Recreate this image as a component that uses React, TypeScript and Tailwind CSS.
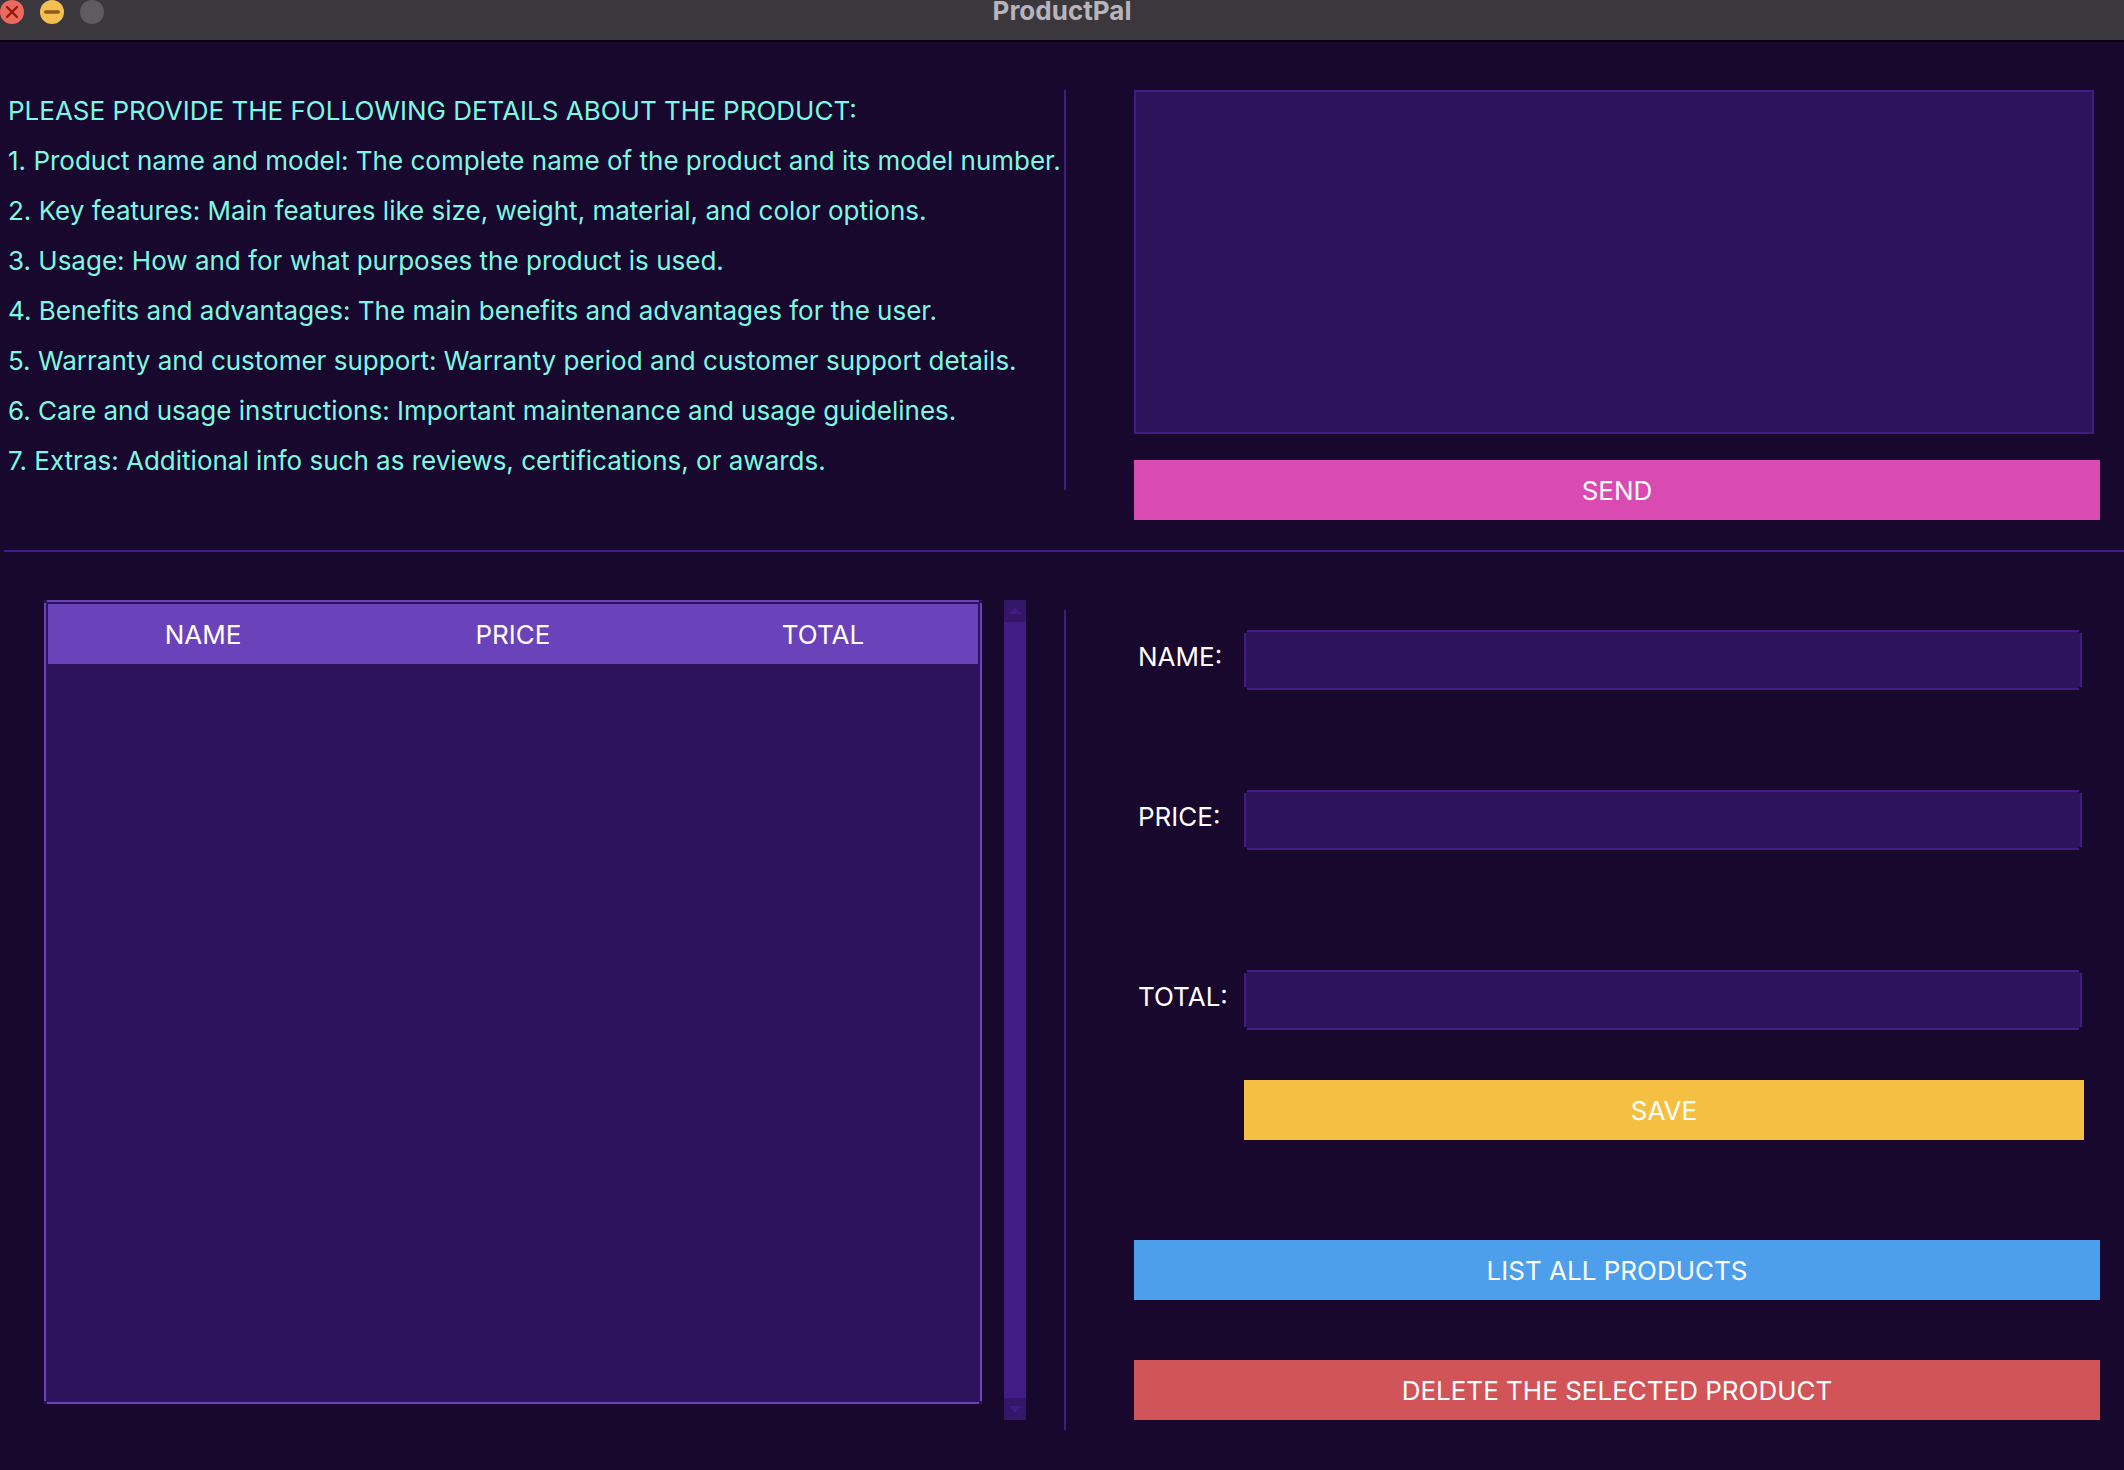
import type { ReactNode } from "react";

const instructions = [
  "PLEASE PROVIDE THE FOLLOWING DETAILS ABOUT THE PRODUCT:",
  "1. Product name and model: The complete name of the product and its model number.",
  "2. Key features: Main features like size, weight, material, and color options.",
  "3. Usage: How and for what purposes the product is used.",
  "4. Benefits and advantages: The main benefits and advantages for the user.",
  "5. Warranty and customer support: Warranty period and customer support details.",
  "6. Care and usage instructions: Important maintenance and usage guidelines.",
  "7. Extras: Additional info such as reviews, certifications, or awards.",
];

// Cuts a small square notch out of each corner of a framed box.
const notched =
  "[clip-path:polygon(3px_0,calc(100%_-_3px)_0,calc(100%_-_3px)_3px,100%_3px,100%_calc(100%_-_3px),calc(100%_-_3px)_calc(100%_-_3px),calc(100%_-_3px)_100%,3px_100%,3px_calc(100%_-_3px),0_calc(100%_-_3px),0_3px,3px_3px)]";

function TitleBar() {
  return (
    <header className="flex h-[42px] items-start border-b-2 border-[#08040d] bg-[#3a373d]">
      <div className="flex flex-1 gap-4">
        <button type="button" aria-label="Close" className="size-6">
          <svg viewBox="0 0 24 24" className="size-6">
            <circle cx="12" cy="12" r="12" fill="#ed6a5e" />
            <path d="M7 7l10 10M17 7L7 17" stroke="#8c1a10" strokeWidth="2.4" strokeLinecap="round" />
          </svg>
        </button>
        <button type="button" aria-label="Minimize" className="size-6">
          <svg viewBox="0 0 24 24" className="size-6">
            <circle cx="12" cy="12" r="12" fill="#f5bf4f" />
            <rect x="4" y="10.3" width="16" height="3.4" rx="1.7" fill="#8f591d" />
          </svg>
        </button>
        <button type="button" aria-label="Zoom" disabled className="size-6 rounded-full bg-[#5e5b61]" />
      </div>
      <h1 className="text-[26px] leading-[22px] font-bold text-[#b8b4bb]">ProductPal</h1>
      <div className="flex-1" />
    </header>
  );
}

function Bar({ color, children }: { color: string; children: ReactNode }) {
  return (
    <button type="button" className={`h-[60px] w-full text-center text-white ${color}`}>
      {children}
    </button>
  );
}

function Field({ id, label }: { id: string; label: string }) {
  return (
    <div className="flex">
      <label htmlFor={id} className="w-[110px] shrink-0 pl-1 leading-[54px] text-white">
        {label}
      </label>
      <input
        id={id}
        type="text"
        className={`mr-[2px] h-[60px] min-w-0 flex-1 border-2 border-[#421c85] bg-[#2d135b] px-3 text-white outline-none ${notched}`}
      />
    </div>
  );
}

function ScrollBar() {
  return (
    <div className="flex w-[22px] flex-col bg-[#421c85]">
      <button type="button" aria-label="Scroll up" className="size-[22px] bg-[#35176a]">
        <svg viewBox="0 0 22 22" className="size-[22px]">
          <path d="M4.5 14L11 7.5L17.5 14Z" fill="#421c85" />
        </svg>
      </button>
      <div className="flex-1" />
      <button type="button" aria-label="Scroll down" className="size-[22px] bg-[#35176a]">
        <svg viewBox="0 0 22 22" className="size-[22px]">
          <path d="M4.5 8L11 14.5L17.5 8Z" fill="#421c85" />
        </svg>
      </button>
    </div>
  );
}

export default function App() {
  return (
    <div className="flex min-h-screen flex-col bg-[#18082d] font-['Inter',sans-serif] text-[26px]">
      <TitleBar />

      <section className="grid grid-cols-[minmax(0,1066fr)_minmax(0,1058fr)] pt-12 pb-[30px]">
        <div className="h-[400px] border-r-2 border-[#421c85] pl-2 leading-[50px] whitespace-nowrap text-[#7df9e3]">
          <div className="-mt-1">
            {instructions.map((line) => (
              <p key={line}>{line}</p>
            ))}
          </div>
        </div>
        <div className="pr-6 pl-[68px]">
          <div className="flex pr-[6px] pb-[26px]">
            <textarea
              aria-label="Product details"
              className="h-[344px] w-full resize-none border-2 border-[#421c85] bg-[#2d135b] p-3 text-white outline-none"
            />
          </div>
          <Bar color="bg-[#d94ab3]">SEND</Bar>
        </div>
      </section>

      <hr className="ml-1 border-t-2 border-[#421c85]" />

      <section className="grid flex-1 grid-cols-[minmax(0,1066fr)_minmax(0,1058fr)]">
        <div className="mt-[58px] mb-10 flex border-r-2 border-[#421c85] pr-[38px] pl-11">
          <div className="-mt-[10px] mb-[10px] flex flex-1 gap-[22px]">
            <div className="mb-4 flex-1 bg-[#2d135b]">
              <div className={`h-full border-2 border-[#6a43ba] p-[2px] ${notched}`}>
                <table className="w-full table-fixed">
                  <thead>
                    <tr className="h-[60px] bg-[#6a43ba] text-white">
                      <th scope="col" className="font-normal">NAME</th>
                      <th scope="col" className="font-normal">PRICE</th>
                      <th scope="col" className="font-normal">TOTAL</th>
                    </tr>
                  </thead>
                  <tbody />
                </table>
              </div>
            </div>
            <ScrollBar />
          </div>
        </div>

        <form className="pt-[78px] pr-6 pl-[68px]" onSubmit={(event) => event.preventDefault()}>
          <div className="pr-4">
            <Field id="name" label="NAME:" />
            <div className="mt-[100px]">
              <Field id="price" label="PRICE:" />
            </div>
            <div className="mt-[120px]">
              <Field id="total" label="TOTAL:" />
            </div>
            <div className="mt-[50px] pl-[110px]">
              <Bar color="bg-[#f5bf42]">SAVE</Bar>
            </div>
          </div>
          <div className="mt-[100px]">
            <Bar color="bg-[#4d9eeb]">LIST ALL PRODUCTS</Bar>
          </div>
          <div className="mt-[60px]">
            <Bar color="bg-[#d15459]">DELETE THE SELECTED PRODUCT</Bar>
          </div>
        </form>
      </section>
    </div>
  );
}
